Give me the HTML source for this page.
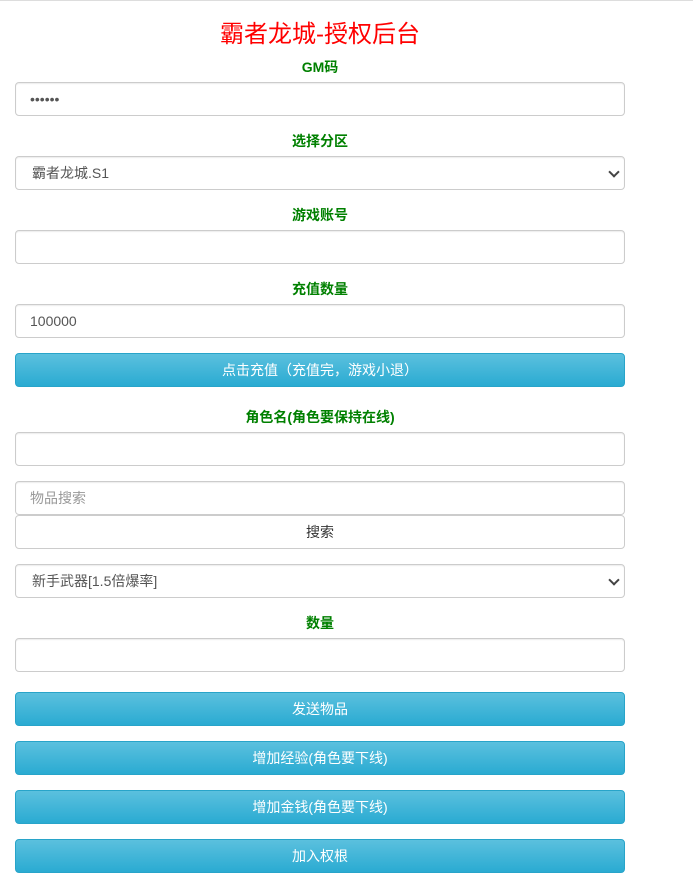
<!DOCTYPE html>
<html><head><meta charset="utf-8"><style>
body{margin:0;width:693px;height:894px;background:#fff;position:relative;font-family:"Liberation Sans","Noto Sans CJK SC",sans-serif;overflow:hidden}
.top{position:absolute;left:0;top:0;width:693px;height:1px;background:#ddd}
.t{position:absolute;left:15px;width:610px;text-align:center}
.title{top:19px;font-size:24px;color:#f00;line-height:32px}
.lab{font-size:14px;font-weight:bold;color:#008000;line-height:18px}
.box{position:absolute;left:15px;height:32px;border:1px solid #ccc;border-radius:4px;background:#fff;box-shadow:inset 0 1px 1px rgba(0,0,0,.075);font-size:14px;color:#555;line-height:32px;padding-left:14px;box-sizing:content-box;width:594px}
.ph{color:#999}
.btn{position:absolute;left:15px;width:608px;height:32px;border:1px solid #28a4c9;border-radius:4px;background:linear-gradient(#5bc0de,#2aabd2);color:#fff;font-size:14px;text-align:center;line-height:32px}
.wbtn{position:absolute;left:15px;width:608px;height:32px;border:1px solid #ccc;border-radius:4px;background:#fff;color:#333;font-size:14px;text-align:center;line-height:32px}
.arr{position:absolute;right:6px;top:11px;width:6px;height:6px;border-right:2px solid #444;border-bottom:2px solid #444;transform:rotate(45deg)}
</style></head><body>
<div class="top"></div>
<div class="t title">霸者龙城-授权后台</div>
<div class="t lab" style="top:58px">GM码</div>
<div class="box" style="top:82px">••••••</div>
<div class="t lab" style="top:132px">选择分区</div>
<div class="box" style="top:156px;padding-left:16px;width:592px">霸者龙城.S1<span class="arr"></span></div>
<div class="t lab" style="top:206px">游戏账号</div>
<div class="box" style="top:230px"></div>
<div class="t lab" style="top:280px">充值数量</div>
<div class="box" style="top:304px">100000</div>
<div class="btn" style="top:353px">点击充值（充值完，游戏小退）</div>
<div class="t lab" style="top:408px">角色名(角色要保持在线)</div>
<div class="box" style="top:432px"></div>
<div class="box ph" style="top:481px">物品搜索</div>
<div class="wbtn" style="top:515px">搜索</div>
<div class="box" style="top:564px;padding-left:16px;width:592px">新手武器[1.5倍爆率]<span class="arr"></span></div>
<div class="t lab" style="top:614px">数量</div>
<div class="box" style="top:638px"></div>
<div class="btn" style="top:692px">发送物品</div>
<div class="btn" style="top:741px">增加经验(角色要下线)</div>
<div class="btn" style="top:790px">增加金钱(角色要下线)</div>
<div class="btn" style="top:839px">加入权根</div>
</body></html>
